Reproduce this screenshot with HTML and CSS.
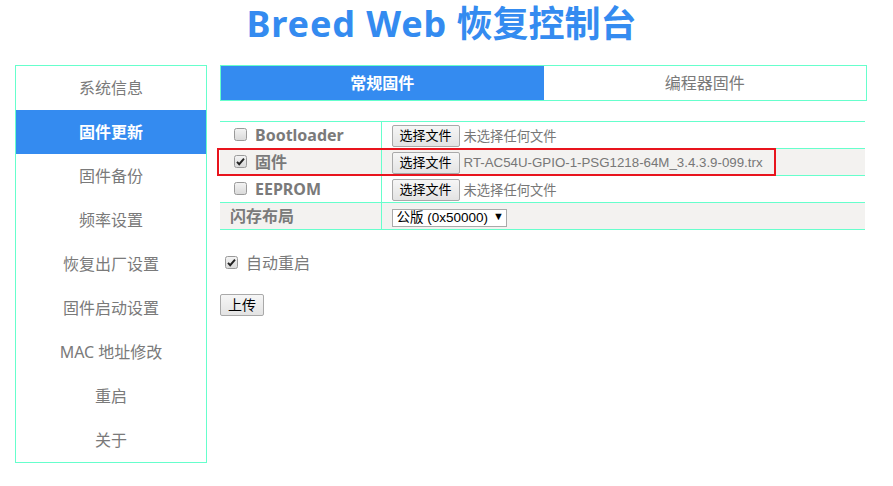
FILE: index.html
```html
<!DOCTYPE html>
<html lang="zh-CN">
<head>
<meta charset="utf-8">
<title>Breed Web 恢复控制台</title>
<link rel="stylesheet" href="styles.css">
</head>
<body>
<h1 class="title"><span class="title-latin">Breed Web</span> 恢复控制台</h1>
<div class="layout">
  <nav class="sidebar">
    <a class="nav-item">系统信息</a>
    <a class="nav-item active">固件更新</a>
    <a class="nav-item">固件备份</a>
    <a class="nav-item">频率设置</a>
    <a class="nav-item">恢复出厂设置</a>
    <a class="nav-item">固件启动设置</a>
    <a class="nav-item">MAC 地址修改</a>
    <a class="nav-item">重启</a>
    <a class="nav-item">关于</a>
  </nav>
  <main class="content">
    <div class="tabs">
      <div class="tab active">常规固件</div>
      <div class="tab">编程器固件</div>
    </div>
    <div class="table-wrap">
      <table class="fw-table">
        <tr>
          <td class="label-cell"><span class="cb"><svg width="13" height="13" viewBox="0 0 13 13"><defs><linearGradient id="g1" x1="0" y1="0" x2="0" y2="1"><stop offset="0" stop-color="#f4f4f4"/><stop offset="1" stop-color="#d9d9d9"/></linearGradient></defs><rect x="0.5" y="0.5" width="12" height="12" rx="2" fill="url(#g1)" stroke="#9a9a9a"/></svg></span><span class="label">Bootloader</span></td>
          <td class="field-cell"><span class="file-btn">选择文件</span><span class="file-name">未选择任何文件</span></td>
        </tr>
        <tr class="shaded">
          <td class="label-cell"><span class="cb"><svg width="13" height="13" viewBox="0 0 13 13"><rect x="0.5" y="0.5" width="12" height="12" rx="2" fill="url(#g1)" stroke="#9a9a9a"/><path d="M3 6.8 L5.2 9.2 L10 3.6" fill="none" stroke="#222" stroke-width="1.9"/></svg></span><span class="label">固件</span></td>
          <td class="field-cell"><span class="file-btn">选择文件</span><span class="file-name">RT-AC54U-GPIO-1-PSG1218-64M_3.4.3.9-099.trx</span></td>
        </tr>
        <tr>
          <td class="label-cell"><span class="cb"><svg width="13" height="13" viewBox="0 0 13 13"><rect x="0.5" y="0.5" width="12" height="12" rx="2" fill="url(#g1)" stroke="#9a9a9a"/></svg></span><span class="label">EEPROM</span></td>
          <td class="field-cell"><span class="file-btn">选择文件</span><span class="file-name">未选择任何文件</span></td>
        </tr>
        <tr class="shaded">
          <td class="label-cell plain"><span class="label">闪存布局</span></td>
          <td class="field-cell"><span class="select">公版 (0x50000)<span class="arrow">▼</span></span></td>
        </tr>
      </table>
      <div class="highlight"></div>
    </div>
    <div class="option">
      <span class="cb"><svg width="13" height="13" viewBox="0 0 13 13"><rect x="0.5" y="0.5" width="12" height="12" rx="2" fill="url(#g1)" stroke="#9a9a9a"/><path d="M3 6.8 L5.2 9.2 L10 3.6" fill="none" stroke="#222" stroke-width="1.9"/></svg></span><span class="option-text">自动重启</span>
    </div>
    <div class="actions">
      <span class="btn">上传</span>
    </div>
  </main>
</div>
</body>
</html>
```
FILE: styles.css
```css
* { box-sizing: border-box; }
body {
  margin: 0;
  background: #fff;
  font-family: "Noto Sans", "Noto Sans CJK SC", sans-serif;
  color: #777;
}
.title {
  margin: 0;
  height: 50px;
  line-height: 48px;
  text-align: center;
  font-size: 36px;
  font-weight: bold;
  color: #348bf0;
  padding-right: 10px;
}
.title-latin {
  letter-spacing: 0.9px;
}
.layout {
  display: flex;
  align-items: flex-start;
  gap: 13px;
  padding: 15px 0 0 15px;
}
.sidebar {
  width: 192px;
  border: 1px solid #66ffcc;
  display: flex;
  flex-direction: column;
}
.nav-item {
  display: block;
  height: 44px;
  line-height: 44px;
  text-align: center;
  font-size: 16px;
  color: #7a7a7a;
}
.nav-item.active {
  background: #348bf0;
  color: #fff;
  font-weight: bold;
}
.content {
  width: 647px;
}
.tabs {
  display: flex;
  border: 1px solid #66ffcc;
  height: 36px;
}
.tab {
  flex: 1;
  text-align: center;
  line-height: 34px;
  font-size: 16px;
  color: #7a7a7a;
}
.tab.active {
  background: #348bf0;
  color: #fff;
  font-weight: bold;
}
.table-wrap {
  position: relative;
  margin-top: 20px;
  width: 645px;
}
.fw-table {
  width: 645px;
  border-collapse: collapse;
}
.fw-table td {
  border-top: 1px solid #66ffcc;
  border-bottom: 1px solid #66ffcc;
  height: 27px;
  padding: 0;
  vertical-align: middle;
  white-space: nowrap;
}
.fw-table tr.shaded td { background: #f3f2f0; }
.label-cell {
  width: 161px;
  padding-left: 14px !important;
}
.label-cell.plain { padding-left: 10px !important; }
.field-cell {
  border-left: 1px solid #66ffcc;
  padding-left: 10px !important;
}
.cb {
  display: inline-block;
  width: 13px;
  height: 13px;
  vertical-align: middle;
  margin-right: 8px;
  position: relative;
  top: -1px;
}
.cb svg { display: block; }
.label {
  font-size: 16px;
  font-weight: bold;
  color: #7a7a7a;
  vertical-align: middle;
  position: relative;
  top: -1px;
}
.file-btn {
  display: inline-block;
  vertical-align: middle;
  height: 22px;
  line-height: 20px;
  padding: 0 7px;
  font-size: 13px;
  color: #000;
  border: 1px solid #a9a9a9;
  border-radius: 2px;
  background: linear-gradient(#f6f6f6, #e3e3e3);
  font-family: "Liberation Sans", "Noto Sans CJK SC", sans-serif;
}
.file-name {
  display: inline-block;
  vertical-align: middle;
  margin-left: 4px;
  font-size: 13.3px;
  color: #777;
  font-family: "Liberation Sans", "Noto Sans CJK SC", sans-serif;
}
.select {
  display: inline-block;
  vertical-align: middle;
  width: 115px;
  height: 18px;
  line-height: 16px;
  padding-left: 4px;
  font-size: 13.5px;
  color: #000;
  background: #fff;
  border: 1px solid #a9a9a9;
  font-family: "Liberation Sans", "Noto Sans CJK SC", sans-serif;
}
.arrow {
  font-size: 11px;
  margin-left: 5px;
  position: relative;
  top: -2px;
}
.highlight {
  position: absolute;
  left: -3px;
  top: 27px;
  width: 559px;
  height: 28px;
  border: 2px solid #e8141d;
}
.option {
  display: flex;
  align-items: center;
  margin-top: 20px;
  padding-left: 5px;
}
.option .cb { margin-right: 8px; top: 0; }
.option-text {
  font-size: 16px;
  color: #7a7a7a;
}
.actions {
  margin-top: 19px;
}
.btn {
  display: inline-block;
  height: 22px;
  line-height: 20px;
  padding: 0 7px;
  font-size: 14px;
  color: #000;
  border: 1px solid #a9a9a9;
  border-radius: 2px;
  background: linear-gradient(#f6f6f6, #e3e3e3);
  font-family: "Liberation Sans", "Noto Sans CJK SC", sans-serif;
}
```
